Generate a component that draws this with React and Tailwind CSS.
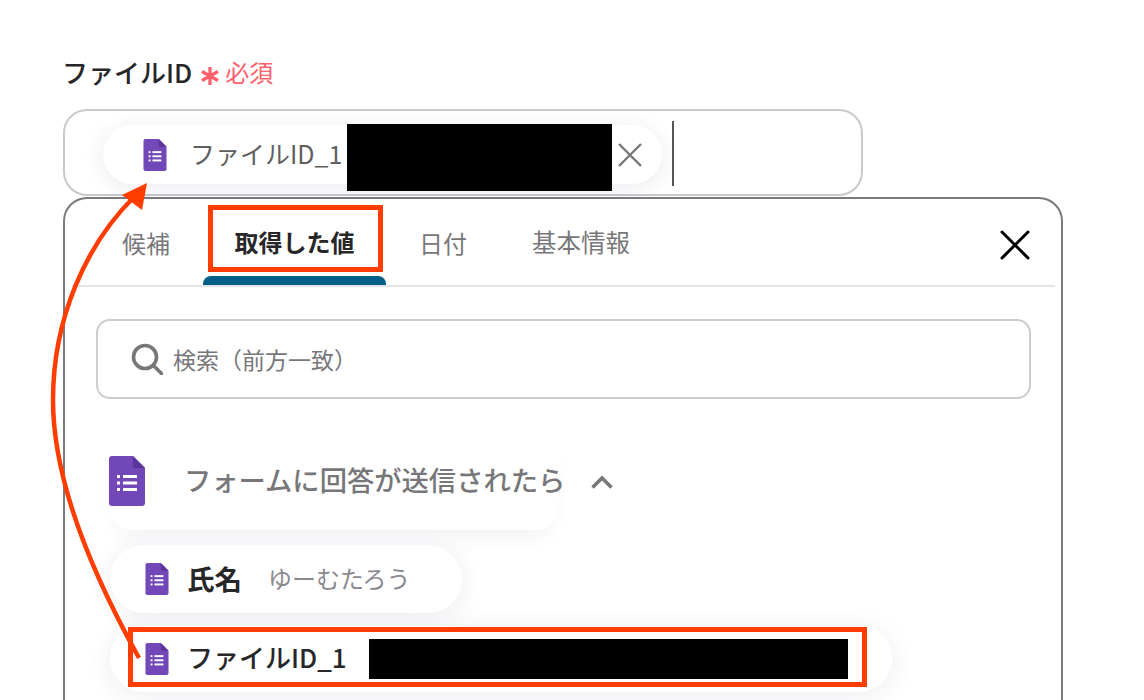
const FONT = { fontFamily: '"Noto Sans CJK JP", "Noto Sans", sans-serif' };

function FormIcon({ className }) {
  return (
    <svg viewBox="0 0 36 50" className={className}>
      <path d="M3 0H24L36 12V47a3 3 0 0 1-3 3H3a3 3 0 0 1-3-3V3a3 3 0 0 1 3-3Z" fill="#7248b9" />
      <path d="M24 0L36 12H27a3 3 0 0 1-3-3Z" fill="#5a3597" />
      <g fill="#fff">
        <rect x="8" y="19" width="3" height="3" />
        <rect x="8" y="25.5" width="3" height="3" />
        <rect x="8" y="32" width="3" height="3" />
        <rect x="14" y="19" width="14" height="3" />
        <rect x="14" y="25.5" width="14" height="3" />
        <rect x="14" y="32" width="14" height="3" />
      </g>
    </svg>
  );
}

export default function App() {
  return (
    <div style={FONT} className="relative h-[700px] w-[1144px] overflow-hidden bg-white">
      <div className="flex flex-col pl-[63px] pt-[53px]">
        <div className="flex h-[38px] items-center">
          <span className="-ml-px text-[26px] font-medium leading-[38px] text-[#27272a]">ファイルID</span>
          <svg viewBox="0 0 18 18" className="ml-[9px] mt-[7px] h-[18px] w-[18px] shrink-0" fill="none" stroke="#ff5e6c" strokeWidth="3.2">
            <path d="M9 0V18M1 4.5L17 13.5M17 4.5L1 13.5" />
          </svg>
          <span className="ml-[6px] text-[24px] leading-[38px] text-[#ff5e6c]">必須</span>
        </div>

        <div className="mt-[18px] flex h-[87px] w-[800px] items-center rounded-[24px] border-2 border-[#c9c9cc] pl-[38px]">
          <div className="mt-[4px] flex h-[59px] w-[559px] shrink-0 items-center rounded-full bg-white pl-[40px] shadow-[0_4px_22px_rgba(60,40,90,0.10)]">
            <FormIcon className="h-[32px] w-[24px] shrink-0" />
            <span className="-mt-[3px] ml-[23px] mr-[5px] w-[152px] shrink-0 whitespace-nowrap text-[25px] leading-[38px] text-[#5f5f62]">ファイルID_1</span>
            <div className="mt-[6px] h-[67px] w-[265px] shrink-0 bg-black" />
            <svg viewBox="0 0 24 24" className="ml-[6px] h-[24px] w-[24px] shrink-0" fill="none" stroke="#77777a" strokeWidth="2.4">
              <path d="M1 1L23 23M23 1L1 23" />
            </svg>
          </div>
          <div className="ml-[10px] mt-[2px] h-[65px] w-[2px] bg-[#55555a]" />
        </div>

        <div className="mt-px h-[560px] w-[1000px] rounded-t-[24px] border-2 border-b-0 border-[#7a7a7e] bg-white pl-[7px] pr-[6px]">
          <div className="relative flex h-[88px] items-end border-b-2 border-[#e4e4e6]">
            <div className="flex h-[86px] w-[131px] items-center pl-[50px] pt-px text-[24px] text-[#77777a]">候補</div>
            <div className="flex h-[86px] w-[183px] flex-col items-center">
              <div className="flex h-[77px] items-center pb-[4px] pt-[12px] text-[24px] font-bold text-[#27272a]">取得した値</div>
              <div className="h-[9px] w-full rounded-t-[8px] bg-[#005f86]" />
            </div>
            <div className="flex h-[86px] w-[146px] items-center pl-[33px] pt-px text-[24px] text-[#77777a]">日付</div>
            <div className="flex h-[86px] items-center pt-px text-[24.5px] text-[#77777a]">基本情報</div>
            <svg viewBox="0 0 30 30" className="ml-auto mb-[25px] mr-[25px] h-[30px] w-[30px]" fill="none" stroke="#000" strokeWidth="3" strokeLinecap="round">
              <path d="M2 2L28 28M28 2L2 28" />
            </svg>
          </div>

          <div className="ml-[24px] mt-[32px] flex h-[80px] w-[935px] items-center rounded-[14px] border-2 border-[#cdcdd0] pl-[33px]">
            <svg viewBox="0 0 32 32" className="h-[32px] w-[32px] shrink-0" fill="none" stroke="#77777a" strokeWidth="3.6">
              <circle cx="14" cy="14" r="11.5" />
              <path d="M23 23L31 31" strokeLinecap="round" />
            </svg>
            <span className="ml-[10px] text-[23px] text-[#77777a]">検索（前方一致）</span>
          </div>

          <div className="ml-[37px] mt-[36px] flex h-[95px] w-[450px] items-start rounded-b-[24px] bg-white pt-[21px] shadow-[0_14px_24px_-12px_rgba(60,40,90,0.09)]">
            <FormIcon className="h-[50px] w-[36px] shrink-0" />
            <span className="ml-[39px] mt-[3px] whitespace-nowrap text-[27.3px] font-medium leading-[40px] text-[#77777a]">フォームに回答が送信されたら</span>
            <svg viewBox="0 0 22 14" className="ml-[26px] mt-[19px] h-[14px] w-[22px] shrink-0" fill="none" stroke="#77777a" strokeWidth="3.6">
              <path d="M1.5 12.5L11 3L20.5 12.5" />
            </svg>
          </div>

          <div className="ml-[38px] mt-[15px] flex h-[68px] w-[352px] items-center rounded-full bg-white pl-[35px] shadow-[0_4px_26px_rgba(60,40,90,0.09)]">
            <FormIcon className="h-[32px] w-[24px] shrink-0" />
            <span className="-mt-[2px] ml-[18px] text-[27.5px] font-bold leading-[38px] text-[#27272a]">氏名</span>
            <span className="-mt-[2px] ml-[26px] text-[24px] leading-[38px] text-[#8a8a8e]">ゆーむたろう</span>
          </div>

          <div className="ml-[38px] mt-[12px] flex h-[67px] w-[782px] items-center rounded-full bg-white pl-[35px] shadow-[0_4px_26px_rgba(60,40,90,0.09)]">
            <FormIcon className="h-[32px] w-[24px] shrink-0" />
            <span className="-mt-[3px] ml-[18px] w-[161px] shrink-0 whitespace-nowrap text-[26px] font-medium leading-[38px] text-[#27272a]">ファイルID_1</span>
            <div className="ml-[21px] h-[40px] w-[479px] bg-black" />
          </div>
        </div>
      </div>

      {/* annotations */}
      <div className="absolute left-[208px] top-[205px] h-[67px] w-[175px] border-[5px] border-[#ff3d00]" />
      <div className="absolute left-[128px] top-[627px] h-[60px] w-[739px] border-[5px] border-[#ff3d00]" />
      <svg className="absolute left-0 top-0 h-[700px] w-[1144px]" viewBox="0 0 1144 700" fill="none">
        <path d="M139 658C90 570 53 480 53 400C53 320 85 245 135 196" stroke="#ff3d00" strokeWidth="4.5" />
        <path d="M147 183L122 195L142 210Z" fill="#ff3d00" />
      </svg>
    </div>
  );
}
